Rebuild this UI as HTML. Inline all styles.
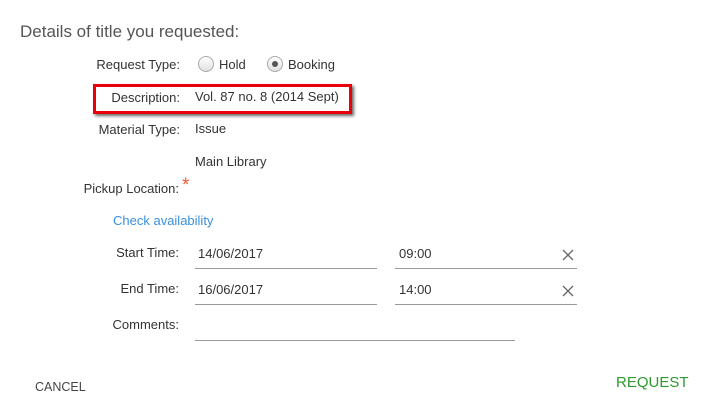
<!DOCTYPE html>
<html><head><style>
body{margin:0;width:710px;height:414px;background:#fff;font-family:"Liberation Sans",sans-serif;color:#333;position:relative;overflow:hidden}
.a{position:absolute;white-space:nowrap;font-size:13px;line-height:16px}
.l{text-align:right;width:200px}
.line{position:absolute;height:1px;background:#999}
.r{position:absolute;width:16px;height:16px;border-radius:50%;border:1px solid #aaa;background:linear-gradient(#fff,#e0e0e0);box-sizing:border-box}
.x{position:absolute;width:12px;height:12px}
</style></head><body>
<div class="a" style="left:20px;top:22px;font-size:17px;line-height:20px;color:#555">Details of title you requested:</div>

<div class="a l" style="left:-20px;top:57px">Request Type:</div>
<div class="r" style="left:198px;top:56px"></div>
<div class="a" style="left:219px;top:57px">Hold</div>
<div class="r" style="left:267px;top:56px"><div style="position:absolute;left:4px;top:4px;width:6px;height:6px;border-radius:50%;background:#555"></div></div>
<div class="a" style="left:288px;top:57px">Booking</div>

<div style="position:absolute;left:93px;top:84px;width:253px;height:24px;border:3px solid #e8000b;box-shadow:2px 2px 3px rgba(0,0,0,.6)"></div>
<div class="a l" style="left:-20px;top:90px">Description:</div>
<div class="a" style="left:195px;top:89px">Vol. 87 no. 8 (2014 Sept)</div>

<div class="a l" style="left:-20px;top:122px">Material Type:</div>
<div class="a" style="left:195px;top:121px">Issue</div>
<div class="a" style="left:195px;top:154px">Main Library</div>
<div class="a l" style="left:-21px;top:181px">Pickup Location:</div>
<div class="a" style="left:182px;top:178px;color:#f05a3c;font-size:19px">*</div>

<div class="a" style="left:113px;top:213px;color:#3a8fd9">Check availability</div>

<div class="a l" style="left:-21px;top:245px">Start Time:</div>
<div class="a" style="left:198px;top:246px">14/06/2017</div>
<div class="line" style="left:195px;top:268px;width:182px"></div>
<div class="a" style="left:399px;top:246px">09:00</div>
<svg class="x" style="left:562px;top:249px" viewBox="0 0 12 12"><path d="M1 1L11 11M11 1L1 11" stroke="#666" stroke-width="1.3"/></svg>
<div class="line" style="left:395px;top:268px;width:182px"></div>

<div class="a l" style="left:-21px;top:281px">End Time:</div>
<div class="a" style="left:198px;top:282px">16/06/2017</div>
<div class="line" style="left:195px;top:304px;width:182px"></div>
<div class="a" style="left:399px;top:282px">14:00</div>
<svg class="x" style="left:562px;top:285px" viewBox="0 0 12 12"><path d="M1 1L11 11M11 1L1 11" stroke="#666" stroke-width="1.3"/></svg>
<div class="line" style="left:395px;top:304px;width:182px"></div>

<div class="a l" style="left:-21px;top:317px">Comments:</div>
<div class="line" style="left:195px;top:340px;width:320px"></div>

<div class="a" style="left:35px;top:379px;color:#444;font-size:12.5px">CANCEL</div>
<div class="a" style="left:616px;top:374px;color:#2e9a2e;font-size:15px;line-height:18px">REQUEST</div>
</body></html>
